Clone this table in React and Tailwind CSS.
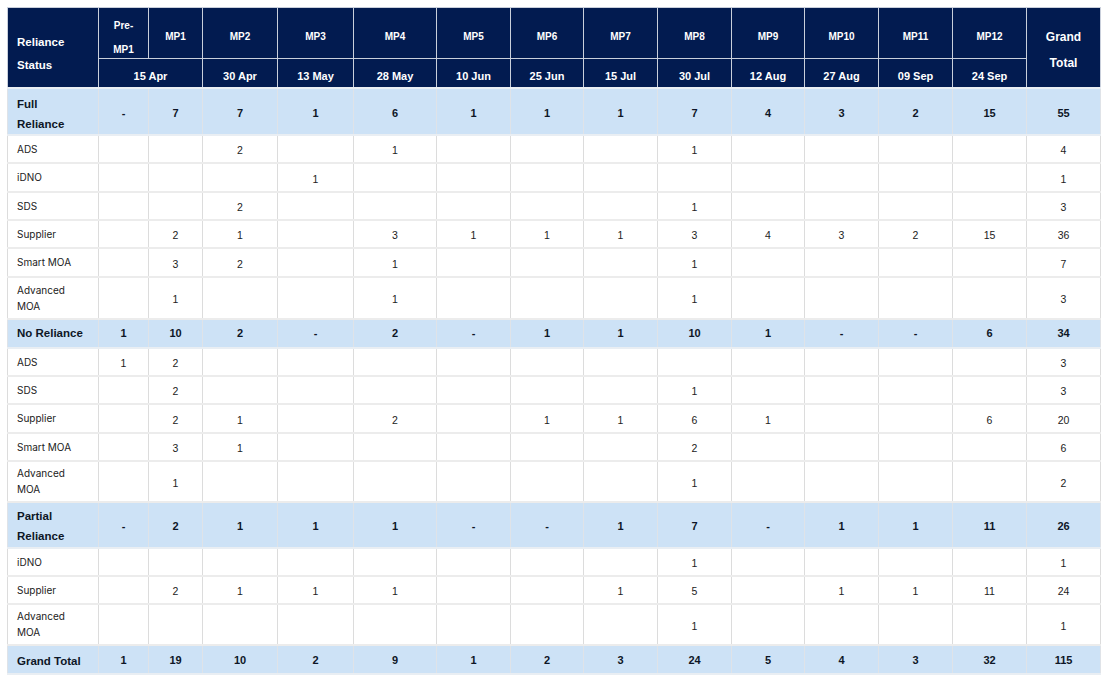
import React from "react";

const widths = [91, 50, 54, 75, 76, 83, 74, 73, 74, 74, 73, 74, 74, 74, 74];
const mps = ["MP1", "MP2", "MP3", "MP4", "MP5", "MP6", "MP7", "MP8", "MP9", "MP10", "MP11", "MP12"];
const dates = ["30 Apr", "13 May", "28 May", "10 Jun", "25 Jun", "15 Jul", "30 Jul", "12 Aug", "27 Aug", "09 Sep", "24 Sep"];

const e = "";
const rows = [
  { label: ["Full", "Reliance"], bold: true, h: "h-[47px]", pt: "pt-[5px]", v: ["-", 7, 7, 1, 6, 1, 1, 1, 7, 4, 3, 2, 15, 55] },
  { label: ["ADS"], h: "h-[28px]", v: [e, e, 2, e, 1, e, e, e, 1, e, e, e, e, 4] },
  { label: ["iDNO"], h: "h-[29px]", v: [e, e, e, 1, e, e, e, e, e, e, e, e, e, 1] },
  { label: ["SDS"], h: "h-[28px]", v: [e, e, 2, e, e, e, e, e, 1, e, e, e, e, 3] },
  { label: ["Supplier"], h: "h-[28px]", v: [e, 2, 1, e, 3, 1, 1, 1, 3, 4, 3, 2, 15, 36] },
  { label: ["Smart MOA"], h: "h-[29px]", v: [e, 3, 2, e, 1, e, e, e, 1, e, e, e, e, 7] },
  { label: ["Advanced", "MOA"], h: "h-[42px]", v: [e, 1, e, e, 1, e, e, e, 1, e, e, e, e, 3] },
  { label: ["No Reliance"], bold: true, h: "h-[29px]", v: [1, 10, 2, "-", 2, "-", 1, 1, 10, 1, "-", "-", 6, 34] },
  { label: ["ADS"], h: "h-[28px]", v: [1, 2, e, e, e, e, e, e, e, e, e, e, e, 3] },
  { label: ["SDS"], h: "h-[28px]", v: [e, 2, e, e, e, e, e, e, 1, e, e, e, e, 3] },
  { label: ["Supplier"], h: "h-[29px]", v: [e, 2, 1, e, 2, e, 1, 1, 6, 1, e, e, 6, 20] },
  { label: ["Smart MOA"], h: "h-[28px]", v: [e, 3, 1, e, e, e, e, e, 2, e, e, e, e, 6] },
  { label: ["Advanced", "MOA"], h: "h-[41px]", v: [e, 1, e, e, e, e, e, e, 1, e, e, e, e, 2] },
  { label: ["Partial", "Reliance"], bold: true, h: "h-[46px]", pt: "pt-[3px]", v: ["-", 2, 1, 1, 1, "-", "-", 1, 7, "-", 1, 1, 11, 26] },
  { label: ["iDNO"], h: "h-[28px]", v: [e, e, e, e, e, e, e, e, 1, e, e, e, e, 1] },
  { label: ["Supplier"], h: "h-[28px]", v: [e, 2, 1, 1, 1, e, e, 1, 5, e, 1, 1, 11, 24] },
  { label: ["Advanced", "MOA"], h: "h-[41px]", v: [e, e, e, e, e, e, e, e, 1, e, e, e, e, 1] },
  { label: ["Grand Total"], bold: true, h: "h-[29px]", pt: "pt-[3px]", v: [1, 19, 10, 2, 9, 1, 2, 3, 24, 5, 4, 3, 32, 115] },
];

const arial = "font-['Liberation_Sans',Arial,sans-serif]";
const inter = "font-['Inter','Open_Sans',sans-serif]";

export default function App() {
  return (
    <div className="w-[1110px] h-[680px] bg-white pt-[7px] pl-[7px]">
      <table className="table-fixed border-collapse w-[1093px]">
        <colgroup>
          {widths.map((w, i) => (
            <col key={i} style={{ width: w }} />
          ))}
        </colgroup>
        <thead>
          <tr className="h-[51px] bg-[#021b50] text-white">
            <th
              rowSpan={2}
              className={`${arial} border border-[#c9cfdb] text-left align-middle pl-[9px] pt-[13px] text-[11.5px] font-bold leading-[23px]`}
            >
              Reliance
              <br />
              Status
            </th>
            <th className={`${arial} border border-[#c9cfdb] text-center align-middle p-0 text-[10px] font-bold leading-[24px]`}>
              <div className="pt-[5px] -mb-[5px]">
                Pre-
                <br />
                MP1
              </div>
            </th>
            {mps.map((m) => (
              <th key={m} className={`${arial} border border-[#c9cfdb] text-center align-middle pt-[7px] text-[10px] font-bold`}>
                {m}
              </th>
            ))}
            <th
              rowSpan={2}
              className={`${arial} border border-[#c9cfdb] text-center align-middle pt-[6px] text-[12px] font-bold leading-[26px]`}
            >
              Grand
              <br />
              Total
            </th>
          </tr>
          <tr className="h-[29px] bg-[#021b50] text-white">
            <th colSpan={2} className={`${arial} border border-[#c9cfdb] text-center align-middle pt-[6px] text-[11px] font-bold`}>
              15 Apr
            </th>
            {dates.map((d) => (
              <th key={d} className={`${arial} border border-[#c9cfdb] text-center align-middle pt-[6px] text-[11px] font-bold`}>
                {d}
              </th>
            ))}
          </tr>
        </thead>
        <tbody>
          {rows.map((r, ri) => (
            <tr key={ri} className={`${r.h} ${r.bold ? "bg-[#cde2f6]" : "bg-white"}`}>
              <td
                className={
                  r.bold
                    ? `${arial} border-x border-x-[#dfe3e8] border-y-2 border-y-[#e9eef3] text-left align-middle pl-[9px] ${r.pt || ""} text-[11.5px] font-bold text-[#0d1626] leading-[20px]`
                    : `${inter} border-x border-x-[#dcdcdc] border-y-2 border-y-[#ececec] text-left align-middle pl-[9px] text-[10px] text-[#222] leading-[16px]`
                }
              >
                {r.label.map((l, li) => (
                  <React.Fragment key={li}>
                    {li > 0 && <br />}
                    {l}
                  </React.Fragment>
                ))}
              </td>
              {r.v.map((v, vi) => (
                <td
                  key={vi}
                  className={
                    r.bold
                      ? `${arial} border-x border-x-[#dfe3e8] border-y-2 border-y-[#e9eef3] text-center align-middle ${r.pt || ""} text-[11px] font-bold text-[#0d1626]`
                      : `${arial} border-x border-x-[#dcdcdc] border-y-2 border-y-[#ececec] text-center align-middle pt-[5px] text-[10.5px] text-[#222]`
                  }
                >
                  {v}
                </td>
              ))}
            </tr>
          ))}
        </tbody>
      </table>
    </div>
  );
}
